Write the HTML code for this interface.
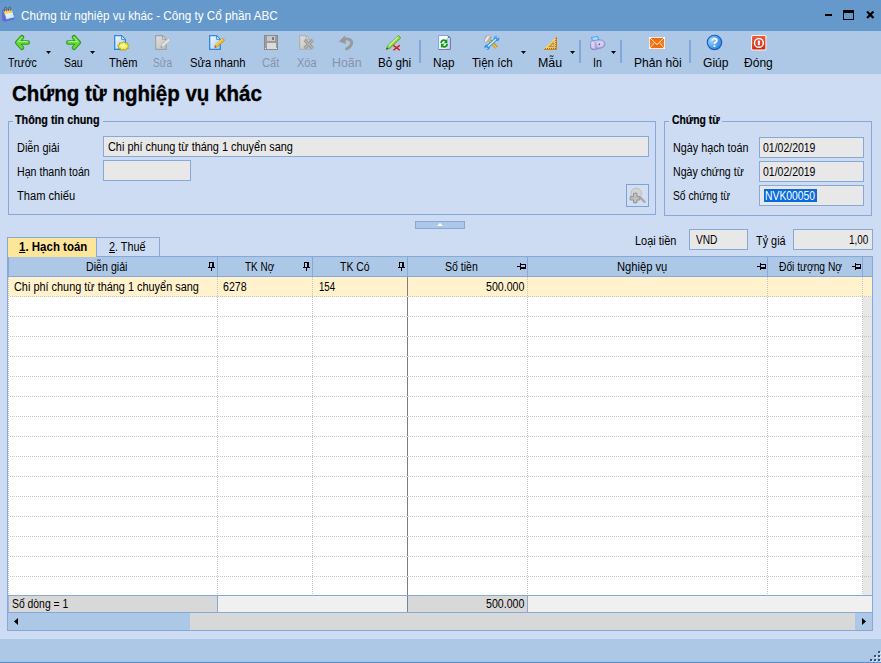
<!DOCTYPE html>
<html>
<head>
<meta charset="utf-8">
<title>Chứng từ nghiệp vụ khác</title>
<style>
html,body{margin:0;padding:0;}
body{width:881px;height:663px;overflow:hidden;background:#cddcf2;font-family:"Liberation Sans",sans-serif;font-size:12.5px;color:#000;position:relative;}
.abs{position:absolute;}
.t{position:absolute;white-space:nowrap;line-height:1;transform-origin:0 0;transform:scaleX(0.88);}
#titlebar{left:0;top:0;width:881px;height:31px;background:#6699cb;}
#toolbar{left:0;top:31px;width:881px;height:43px;background:#adc8e7;}
.tl{font-size:12.5px;top:57px;}
.dis{color:#8893a6;}
.sep{position:absolute;top:40px;width:2px;height:23px;background:#82a8d9;}
.dd{position:absolute;top:51px;width:5px;height:3px;background:#000;clip-path:polygon(0 0,100% 0,50% 100%);}
.grp{position:absolute;border:1px solid #86a9d8;box-sizing:border-box;}
.gt{font-weight:bold;-webkit-text-stroke:0.2px #000;}
.inp{position:absolute;box-sizing:border-box;border:1px solid #86a9d8;background:#e8e8e8;}
.hdr{position:absolute;top:257px;height:19px;background:#adc8e7;}
.vs{position:absolute;top:257px;width:1px;height:19px;background:#86a9d8;}
.vd{position:absolute;top:277px;width:0;height:318px;border-left:1px dotted #c0c0c0;}
.hd{position:absolute;left:9px;width:863px;height:0;border-top:1px dotted #c0c0c0;}
.vdl{position:absolute;top:277px;width:1px;height:318px;background:repeating-linear-gradient(to bottom,#c4c4c4 0 1px,transparent 1px 2px);}
.hdl{position:absolute;left:10px;width:862px;height:1px;background:repeating-linear-gradient(to right,#c4c4c4 0 1px,transparent 1px 2px);}
.hc{top:261px;}
</style>
</head>
<body>
<!-- TITLE BAR -->
<div id="titlebar" class="abs"></div>
<div class="t" id="ttl" style="left:21.40px;transform:scaleX(0.9740);top:10px;font-size:12px;color:#fff;">Chứng từ nghiệp vụ khác - Công ty Cổ phần ABC</div>
<!-- window buttons -->
<div class="abs" style="left:825px;top:14px;width:7px;height:2px;background:#000;"></div>
<div class="abs" style="left:843px;top:10px;width:11px;height:10px;box-sizing:border-box;border:1px solid #000;border-top-width:3px;"></div>
<svg class="abs" style="left:866px;top:10px" width="9" height="9" viewBox="0 0 9 9"><path d="M1 1.5 L7.5 8 M7.5 1.5 L1 8" stroke="#000" stroke-width="2.2" fill="none"/></svg>

<!-- TOOLBAR -->
<div id="toolbar" class="abs"></div>
<div class="t tl" id="tl0" style="left:8.00px;transform:scaleX(0.8445);">Trước</div>
<div class="t tl" id="tl1" style="left:64.07px;transform:scaleX(0.8399);">Sau</div>
<div class="t tl" id="tl2" style="left:108.81px;transform:scaleX(0.8884);">Thêm</div>
<div class="t tl dis" id="tl3" style="left:152.74px;transform:scaleX(0.8043);">Sửa</div>
<div class="t tl" id="tl4" style="left:190.26px;transform:scaleX(0.8975);">Sửa nhanh</div>
<div class="t tl dis" id="tl5" style="left:262.04px;transform:scaleX(0.8968);">Cất</div>
<div class="t tl dis" id="tl6" style="left:296.62px;transform:scaleX(0.8831);">Xóa</div>
<div class="t tl dis" id="tl7" style="left:331.58px;transform:scaleX(0.9904);">Hoãn</div>
<div class="t tl" id="tl8" style="left:378.03px;transform:scaleX(0.9372);">Bỏ ghi</div>
<div class="t tl" id="tl9" style="left:433.40px;transform:scaleX(0.9409);">Nạp</div>
<div class="t tl" id="tl10" style="left:471.59px;transform:scaleX(0.9225);">Tiện ích</div>
<div class="t tl" id="tl11" style="left:537.82px;transform:scaleX(0.9914);">Mẫu</div>
<div class="t tl" id="tl12" style="left:593.1px;transform:scaleX(0.85);">In</div>
<div class="t tl" id="tl13" style="left:634.00px;transform:scaleX(0.9661);">Phản hồi</div>
<div class="t tl" id="tl14" style="left:703.00px;transform:scaleX(0.9686);">Giúp</div>
<div class="t tl" id="tl15" style="left:744.44px;transform:scaleX(0.9626);">Đóng</div>
<div class="sep" style="left:419px"></div>
<div class="sep" style="left:579px"></div>
<div class="sep" style="left:620px"></div>
<div class="sep" style="left:689px"></div>
<div class="dd" style="left:46px"></div>
<div class="dd" style="left:90px"></div>
<div class="dd" style="left:521px"></div>
<div class="dd" style="left:570px"></div>
<div class="dd" style="left:611px"></div>
<svg width="0" height="0" style="position:absolute"><defs>
<linearGradient id="gpage" x1="0" y1="0" x2="1" y2="1"><stop offset="0" stop-color="#f8fbff"/><stop offset="1" stop-color="#a3caf3"/></linearGradient>
<linearGradient id="ggray" x1="0" y1="0" x2="1" y2="1"><stop offset="0" stop-color="#e2e2e2"/><stop offset="1" stop-color="#bdbdbd"/></linearGradient>
<radialGradient id="ghelp" cx="0.3" cy="0.35" r="0.85"><stop offset="0" stop-color="#a4d6ff"/><stop offset="0.55" stop-color="#4fa2f2"/><stop offset="1" stop-color="#2277de"/></radialGradient>
<linearGradient id="gred" x1="0" y1="0" x2="0" y2="1"><stop offset="0" stop-color="#ee5a3a"/><stop offset="1" stop-color="#d22a10"/></linearGradient>
<linearGradient id="gprn" x1="0" y1="0" x2="0" y2="1"><stop offset="0" stop-color="#d4d0f2"/><stop offset="1" stop-color="#9a94cf"/></linearGradient>
</defs></svg>
<svg class="abs" style="left:0px;top:0px" width="18" height="26" viewBox="0 0 18 26">
<defs><linearGradient id="gcal" x1="0" y1="0" x2="1" y2="1"><stop offset="0" stop-color="#ffffff"/><stop offset="1" stop-color="#c6defa"/></linearGradient></defs>
<path d="M2.2 9.4 L4 9.2 L14.4 19 L14.2 19.6 L4.4 21.8 L2.2 20.4 Z" fill="#6f62d4"/>
<path d="M3.4 10.8 L12 9.7 L14.8 17.5 L6.2 19.7 Z" fill="url(#gcal)" stroke="#3585e4" stroke-width="0.8" stroke-linejoin="round"/>
<path d="M3.5 10.9 L12 9.8 L12.8 12.2 L4.4 13.9 Z" fill="#f7c832"/>
<path d="M4.6 11.6 L9 11 L9.4 12 L5 12.8 Z" fill="#fde27a"/>
<path d="M4.5 11.6 V8.6 Q4.5 7.2 5.6 7.2 Q6.7 7.2 6.7 8.6 V11.2 M8.5 11 V8.4 Q8.5 7 9.6 7 Q10.7 7 10.7 8.4 V10.8" stroke="#55596a" stroke-width="0.9" fill="none"/>
</svg>
<svg class="abs" style="left:14px;top:34px" width="16" height="17" viewBox="0 0 16 17"><g  fill="none" stroke-linecap="round" stroke-linejoin="round">
<path d="M8 3.3 L3.2 8.5 L8 13.7 M3.8 8.5 H13.7" stroke="#2a9a1c" stroke-width="4.6"/>
<path d="M8 3.4 L3.4 8.5 L8 13.6 M4 8.5 H13.6" stroke="#63d838" stroke-width="2.7"/>
<path d="M7.8 3.4 L4 7.6 H13.2" stroke="#b4f389" stroke-width="1"/>
</g></svg>
<svg class="abs" style="left:65.5px;top:34px" width="16" height="17" viewBox="0 0 16 17"><g transform="translate(16,0) scale(-1,1)" fill="none" stroke-linecap="round" stroke-linejoin="round">
<path d="M8 3.3 L3.2 8.5 L8 13.7 M3.8 8.5 H13.7" stroke="#2a9a1c" stroke-width="4.6"/>
<path d="M8 3.4 L3.4 8.5 L8 13.6 M4 8.5 H13.6" stroke="#63d838" stroke-width="2.7"/>
<path d="M7.8 3.4 L4 7.6 H13.2" stroke="#b4f389" stroke-width="1"/>
</g></svg>
<svg class="abs" style="left:114px;top:34px" width="16" height="17" viewBox="0 0 16 17">
<path d="M0.7 1.7 H7.6 L11.3 5.4 V15.3 H0.7 Z" fill="url(#gpage)" stroke="#2f88da" stroke-width="1.3"/>
<path d="M7.6 1.7 V5.4 H11.3 Z" fill="#e4f0fc" stroke="#2f88da" stroke-width="0.9" stroke-linejoin="round"/>
<path d="M9.4 7.6 L10.9 9.1 L13.3 8.7 L13.2 10.5 L15.3 11.4 L13.7 12.8 L14.6 14.5 L12.2 14.7 L11.5 16.5 L9.4 15.5 L7.3 16.5 L6.6 14.7 L4.2 14.5 L5.1 12.8 L3.5 11.4 L5.6 10.6 L5.5 8.7 L7.9 9.1 Z" fill="#f3ec48" stroke="#a39a1c" stroke-width="0.8" stroke-linejoin="round"/>
<ellipse cx="9.2" cy="11.8" rx="2.8" ry="1.8" fill="#fbf8a0"/>
</svg>
<svg class="abs" style="left:155px;top:34px" width="17" height="17" viewBox="0 0 17 17">
<path d="M0.7 1.7 H7.6 L11.3 5.4 V15.3 H0.7 Z" fill="url(#ggray)" stroke="#a0a0a0" stroke-width="1.2"/>
<path d="M7.6 1.7 V5.4 H11.3 Z" fill="#dcdcdc" stroke="#a0a0a0" stroke-width="0.9" stroke-linejoin="round"/>
<path d="M13.4 4.2 L15.6 6.2 L8.4 12.8 L5.8 13.5 L6.4 11 Z" fill="#e4e4e4" stroke="#b4b4b4" stroke-width="0.8" stroke-linejoin="round"/>
<path d="M5.8 13.5 L6.2 12.2 L7.2 13.1 Z" fill="#6a6a6a"/>
</svg>
<svg class="abs" style="left:209px;top:34px" width="17" height="17" viewBox="0 0 17 17">
<path d="M0.7 1.7 H7.6 L11.3 5.4 V15.3 H0.7 Z" fill="url(#gpage)" stroke="#2f88da" stroke-width="1.3"/>
<path d="M7.6 1.7 V5.4 H11.3 Z" fill="#e4f0fc" stroke="#2f88da" stroke-width="0.9" stroke-linejoin="round"/>
<path d="M13.4 4.2 L15.6 6.2 L8.4 12.8 L5.8 13.5 L6.4 11 Z" fill="#f2bd2e" stroke="#c48a10" stroke-width="0.8" stroke-linejoin="round"/>
<path d="M12.8 5.2 L7 10.6" stroke="#fbe592" stroke-width="0.9"/>
<path d="M5.8 13.5 L6.2 12.2 L7.2 13.1 Z" fill="#222"/>
</svg>
<svg class="abs" style="left:264px;top:35px" width="14" height="15" viewBox="0 0 14 15" shape-rendering="crispEdges">
<rect x="0" y="0" width="14" height="15" fill="#8c8c8c"/>
<rect x="1" y="1" width="12" height="13" fill="#9c9c9c"/>
<rect x="3" y="1" width="8" height="5" fill="#c9c9c9"/>
<rect x="8" y="2" width="2" height="3" fill="#7a7a7a"/>
<rect x="3" y="8" width="9" height="6" fill="#dcdcdc"/>
<rect x="1" y="13" width="1" height="1" fill="#e8e8e8"/><rect x="12" y="13" width="1" height="1" fill="#e8e8e8"/>
</svg>
<svg class="abs" style="left:299px;top:34px" width="16" height="17" viewBox="0 0 16 17">
<path d="M0.7 1.7 H7.4 L11 5.3 V15.3 H0.7 Z" fill="url(#ggray)" stroke="#adadad" stroke-width="1.1"/>
<path d="M7.4 1.7 V5.3 H11 Z" fill="#dcdcdc" stroke="#adadad" stroke-width="0.9" stroke-linejoin="round"/>
<path d="M5.6 6 L13.8 14.4 M13.8 6 L5.6 14.4" stroke="#8f8f8f" stroke-width="3" fill="none"/>
<path d="M5.6 6 L13.8 14.4 M13.8 6 L5.6 14.4" stroke="#b4b4b4" stroke-width="1.6" fill="none"/>
</svg>
<svg class="abs" style="left:338px;top:34px" width="17" height="17" viewBox="0 0 17 17">
<path d="M5 6 C9.5 3.6 14 5.4 13.6 9.2 C13.4 11.8 11.2 13.6 8.6 15" stroke="#999" stroke-width="2.9" fill="none" stroke-linecap="round"/>
<path d="M0.8 7.6 L7 1.6 L8 10 Z" fill="#999"/>
</svg>
<svg class="abs" style="left:385px;top:34px" width="17" height="17" viewBox="0 0 17 17">
<path d="M13.4 1.6 L15.8 3.8 L5 14.2 L1.4 15.4 L2.6 11.8 Z" fill="#8bd93a" stroke="#4c981a" stroke-width="0.8" stroke-linejoin="round"/>
<path d="M13 3 L3.8 12" stroke="#d3f8a8" stroke-width="1.1"/>
<path d="M1.4 15.4 L2 13.7 L3.2 14.8 Z" fill="#222"/>
<path d="M8.4 11.4 L14.8 16.2 M14.8 11.4 L8.4 16.2" stroke="#e21212" stroke-width="1.4" fill="none"/>
</svg>
<svg class="abs" style="left:438px;top:34px" width="14" height="17" viewBox="0 0 14 17">
<path d="M0.6 1.5 H9.8 L12.4 4.1 V15.4 H0.6 Z" fill="#fbfdff"/>
<path d="M8.4 4 H12.4 V15.4 H8.4 Z" fill="#cfdcfb"/>
<path d="M0.6 15.4 V1.5 H9.8" fill="none" stroke="#7fa0dc" stroke-width="1"/>
<path d="M9.8 1.5 L12.4 4.1 V15.4 H0.6" fill="none" stroke="#6a70a2" stroke-width="1"/>
<path d="M9.8 1.5 V4.1 H12.4 Z" fill="#5d6aa8"/><circle cx="11.2" cy="2.9" r="0.7" fill="#4aa0f0"/>
<g id="rf"><path d="M3.2 8.4 C3.6 6.4 5.6 5.6 7.4 6.6" stroke="#0c9a0c" stroke-width="1.9" fill="none" stroke-linecap="round"/>
<path d="M9.3 4.8 V9.3 H5.8 Z" fill="#0c9a0c"/></g>
<use href="#rf" transform="rotate(180 6.1 9.5)"/>
</svg>
<svg class="abs" style="left:484px;top:34px" width="16" height="17" viewBox="0 0 16 17">
<defs><linearGradient id="ghm" x1="0" y1="0" x2="1" y2="0.6"><stop offset="0" stop-color="#8d8d8d"/><stop offset="0.45" stop-color="#f4f4f4"/><stop offset="1" stop-color="#8a8a8a"/></linearGradient></defs>
<path d="M5.4 6.4 L12.6 13.4" stroke="#cf9128" stroke-width="3.5" stroke-linecap="butt"/>
<path d="M5.2 6.6 L12.4 13.6" stroke="#f6d24a" stroke-width="1.1"/>
<path d="M0.2 7.2 L1.4 3.6 L4.4 1.2 L7.4 3.6 L4.6 5.6 L2.4 8.8 Z" fill="url(#ghm)" stroke="#8a8a8a" stroke-width="0.5"/>
<path d="M1.2 3.2 L2.4 2 " stroke="#c8802a" stroke-width="1"/>
<path d="M3.2 13 L12.6 4.6" stroke="#3593e8" stroke-width="3.2" stroke-linecap="round"/>
<circle cx="12.6" cy="4.4" r="2.7" fill="#3593e8"/><circle cx="3.1" cy="13.3" r="2.7" fill="#3593e8"/>
<path d="M4.4 12 L11.6 5.4" stroke="#d3effd" stroke-width="1.4" stroke-linecap="round"/>
<path d="M12.9 4.1 L15.6 1.4" stroke="#adc8e7" stroke-width="1.9"/>
<path d="M2.8 13.6 L0.2 16.2" stroke="#adc8e7" stroke-width="1.9"/>
<path d="M11.4 3.4 L12.4 2.6 M3.6 14.6 L2.6 15.4" stroke="#d3effd" stroke-width="0.8"/>
</svg>
<svg class="abs" style="left:543px;top:35px" width="15" height="16" viewBox="0 0 15 16">
<defs><linearGradient id="gsq" x1="0" y1="0" x2="1" y2="1"><stop offset="0.3" stop-color="#fedd72"/><stop offset="1" stop-color="#eab24a"/></linearGradient></defs>
<path d="M13.9 0.9 V14.9 H0.2 Z" fill="url(#gsq)"/><path d="M13.5 1.6 V14.5 H1" fill="none" stroke="#bf8426" stroke-width="0.9"/>
<path d="M10.9 6.4 V11.9 H5.2 Z" fill="#c48c32"/>
<path d="M10.3 8.8 V11.1 H7.9 Z" fill="#b9d3f0"/>
<path d="M12.2 3.5h1.2 M12.2 5.5h1.2 M12.2 7.5h1.2 M12.2 9.5h1.2 M12.2 11.5h1.2 M2.5 13v1.2 M4.5 13v1.2 M6.5 13v1.2 M8.5 13v1.2 M10.5 13v1.2 M12.5 13v1.2" stroke="#94621a" stroke-width="0.9"/>
</svg>
<svg class="abs" style="left:590px;top:34px" width="16" height="17" viewBox="0 0 16 17">
<path d="M0.8 3 L7.9 1.9 L9.6 5.8 L2.1 7.6 Z" fill="#46a6f2"/>
<path d="M2.2 3.8 L7.2 3 L8.2 5.4 L3 6.6 Z" fill="#a6ddff"/>
<path d="M0.4 9.4 Q0.3 6.8 3 6.5 L10 5.9 Q14.8 6 14.9 10 Q15 13.2 11.6 13.9 L4.2 15.8 Q0.7 16 0.4 13 Z" fill="url(#gprn)" stroke="#8d88c6" stroke-width="0.8"/>
<path d="M4.4 7.2 Q6.8 10.6 5.4 15.2" stroke="#a39edb" stroke-width="0.8" fill="none"/>
<path d="M1.2 8.6 Q3 7.6 4.2 7.8 L4.9 14.6 Q3 15.2 1.4 13.6 Z" fill="#dcdaf8" fill-opacity="0.8"/>
<path d="M7 8.2 Q10.4 7.2 13 8.4 Q14 10.6 12.4 12.6 L7.6 13.4 Z" fill="#dddaf9" fill-opacity="0.7"/>
<circle cx="9.4" cy="10.4" r="0.8" fill="#4d478f"/>
</svg>
<svg class="abs" style="left:649px;top:37px" width="16" height="12" viewBox="0 0 16 12">
<rect x="0" y="0" width="16" height="12" fill="#fde3d0"/>
<rect x="1" y="1" width="14" height="10" fill="#f26d0c"/>
<path d="M1.2 4 L4.4 6 L1.2 9 Z M14.8 4 L11.6 6 L14.8 9 Z" fill="#f57f22"/>
<path d="M1 1 L8 7.6 L15 1" stroke="#fff" stroke-width="1" fill="none" stroke-opacity="0.92"/>
<path d="M1 11 L5.6 5.6 M15 11 L10.4 5.6" stroke="#fff" stroke-width="0.9" fill="none" stroke-opacity="0.85"/>
<rect x="0" y="0" width="1.4" height="1.4" fill="#fff"/><rect x="14.6" y="0" width="1.4" height="1.4" fill="#fff"/><rect x="0" y="10.6" width="1.4" height="1.4" fill="#fff"/><rect x="14.6" y="10.6" width="1.4" height="1.4" fill="#fff"/>
</svg>
<svg class="abs" style="left:706px;top:34px" width="17" height="17" viewBox="0 0 17 17">
<circle cx="8.5" cy="8.4" r="7.2" fill="url(#ghelp)" stroke="#1b5cb5" stroke-width="1.1"/>
<path d="M6.2 6.6 C6.2 4 10.8 4 10.8 6.6 C10.8 8.2 8.5 8.3 8.5 10" stroke="#fff" stroke-width="1.7" fill="none"/>
<rect x="7.6" y="11.2" width="1.8" height="1.7" fill="#fff"/>
</svg>
<svg class="abs" style="left:751px;top:34px" width="17" height="17" viewBox="0 0 17 17">
<rect x="0.1" y="1" width="15.3" height="15.4" rx="1.6" fill="#fdf1ec"/>
<rect x="1.1" y="2" width="13.3" height="13.4" rx="1" fill="url(#gred)"/>
<circle cx="7.9" cy="8.9" r="4.4" fill="none" stroke="#fff" stroke-width="1.5"/>
<rect x="6.9" y="6.6" width="2" height="4.7" rx="0.4" fill="#fff"/>
</svg>

<!-- HEADING -->
<div class="t" id="h1" style="left:12.00px;transform:scaleX(0.9332);top:83px;font-size:22px;font-weight:bold;-webkit-text-stroke:0.35px #000;">Chứng từ nghiệp vụ khác</div>

<!-- GROUP: Thông tin chung -->
<div class="grp" style="left:8px;top:121px;width:648px;height:94px;"></div>
<div class="abs" style="left:13px;top:121px;width:90px;height:1px;background:#cddcf2;"></div>
<div class="t gt" id="gt1" style="left:15.29px;transform:scaleX(0.8633);top:114px;">Thông tin chung</div>
<div class="t" id="x0" style="left:17.15px;transform:scaleX(0.8728);top:142px;">Diễn giải</div>
<div class="t" id="x1" style="left:17.20px;transform:scaleX(0.8509);top:166px;">Hạn thanh toán</div>
<div class="t" id="x2" style="left:17.19px;transform:scaleX(0.8897);top:190px;">Tham chiếu</div>
<div class="inp" style="left:103px;top:136px;width:546px;height:21px;"></div>
<div class="t" id="x3" style="left:108.41px;transform:scaleX(0.8720);top:141px;">Chi phí chung từ tháng 1 chuyển sang</div>
<div class="inp" style="left:103px;top:160px;width:88px;height:21px;"></div>
<div class="inp" style="left:626px;top:184px;width:23px;height:23px;background:#d2dff2;border-color:#7ba3d8;"></div>
<svg class="abs" style="left:627px;top:185px" width="21" height="21" viewBox="0 0 21 21">
<path d="M13.4 12.6 L17.6 16.8" stroke="#a9a9a9" stroke-width="2.4" stroke-linecap="round"/>
<circle cx="9.2" cy="8.4" r="5.3" fill="#d3d3d3" stroke="#bdbdbd" stroke-width="1"/>
<path d="M6.5 8.2 H10 V11.6 H12.8 V15 H10 V17.8 H6.5 V15 H3.2 V11.6 H6.5 Z" fill="#bfbfbf" stroke="#8f8f8f" stroke-width="0.9"/>
</svg>

<!-- GROUP: Chứng từ -->
<div class="grp" style="left:664px;top:121px;width:208px;height:95px;"></div>
<div class="abs" style="left:669px;top:121px;width:53px;height:1px;background:#cddcf2;"></div>
<div class="t gt" id="gt2" style="left:671.78px;transform:scaleX(0.8270);top:114px;">Chứng từ</div>
<div class="t" id="x4" style="left:673.19px;transform:scaleX(0.8619);top:142px;">Ngày hạch toán</div>
<div class="t" id="x5" style="left:673.17px;transform:scaleX(0.8477);top:166px;">Ngày chứng từ</div>
<div class="t" id="x6" style="left:673.33px;transform:scaleX(0.8216);top:190px;">Số chứng từ</div>
<div class="inp" style="left:759px;top:137px;width:105px;height:21px;"></div>
<div class="inp" style="left:759px;top:161px;width:105px;height:21px;"></div>
<div class="inp" style="left:759px;top:185px;width:105px;height:21px;"></div>
<div class="t" id="x7" style="left:763.36px;transform:scaleX(0.8384);top:142px;">01/02/2019</div>
<div class="t" id="x8" style="left:763.36px;transform:scaleX(0.8384);top:166px;">01/02/2019</div>
<div class="abs" style="left:764px;top:189px;width:53px;height:13px;background:#0a6cdc;"></div>
<div class="t" id="x9" style="left:765.29px;transform:scaleX(0.8282);top:190px;color:#fff;">NVK00050</div>

<!-- collapse button -->
<div class="abs" style="left:415px;top:221px;width:50px;height:8px;box-sizing:border-box;border:1px solid #86a9d8;background:#adc8e7;"></div>
<div class="abs" style="left:437px;top:223px;width:0;height:0;border-left:3px solid transparent;border-right:3px solid transparent;border-bottom:3px solid #fff;"></div>

<!-- currency -->
<div class="t" id="x10" style="left:635.00px;transform:scaleX(0.8737);top:235px;">Loại tiền</div>
<div class="inp" style="left:689px;top:229px;width:59px;height:21px;"></div>
<div class="t" id="x11" style="left:695.90px;transform:scaleX(0.8127);top:234px;">VND</div>
<div class="t" id="x12" style="left:755.71px;transform:scaleX(0.8706);top:235px;">Tỷ giá</div>
<div class="inp" style="left:793px;top:229px;width:80px;height:21px;"></div>
<div class="t" id="x13" style="left:849.37px;transform:scaleX(0.7947);top:234px;">1,00</div>

<!-- TABS -->
<div class="abs" style="left:7px;top:237px;width:90px;height:20px;box-sizing:border-box;border:1px solid #86a9d8;border-bottom:none;background:#fde59a;z-index:3;"></div>
<div class="abs" style="left:96px;top:237px;width:64px;height:20px;box-sizing:border-box;border:1px solid #86a9d8;border-bottom:none;background:#cddcf2;"></div>
<div class="t" id="tab1" style="z-index:4;left:18.87px;transform:scaleX(0.9200);top:241px;font-weight:bold;"><u>1</u>. Hạch toán</div>
<div class="t" id="tab2" style="left:109.00px;transform:scaleX(0.8648);top:241px;"><u>2</u>. Thuế</div>

<!-- GRID -->
<div class="abs" id="grid" style="left:7px;top:256px;width:866px;height:375px;box-sizing:border-box;border:1px solid #86a9d8;background:#fff;"></div>
<div class="hdr" style="left:8px;width:864px;"></div>
<div class="abs" style="left:8px;top:276px;width:864px;height:1px;background:#86a9d8;"></div>
<div class="abs" style="left:8px;top:277px;width:864px;height:20px;background:#fff2cc;"></div>
<div class="abs" style="left:863px;top:297px;width:9px;height:298px;background:#e8e8e8;"></div>

<div class="vs" style="left:8px"></div>
<div class="vdl" style="left:8px"></div>
<div class="vs" style="left:217px"></div>
<div class="vs" style="left:312px"></div>
<div class="vs" style="left:407px"></div>
<div class="vs" style="left:527px"></div>
<div class="vs" style="left:767px"></div>
<div class="vs" style="left:862px"></div>
<div class="vdl" style="left:217px"></div>
<div class="vdl" style="left:312px"></div>
<div class="vdl" style="left:527px"></div>
<div class="vdl" style="left:767px"></div>
<div class="vdl" style="left:862px"></div>
<div class="abs" style="left:407px;top:277px;width:1px;height:318px;background:repeating-linear-gradient(to bottom,#7d7d7d 0 19px,#f4f4f4 19px 20px);"></div>
<div class="hdl" style="top:296px"></div>
<div class="hdl" style="top:316px"></div>
<div class="hdl" style="top:336px"></div>
<div class="hdl" style="top:356px"></div>
<div class="hdl" style="top:376px"></div>
<div class="hdl" style="top:396px"></div>
<div class="hdl" style="top:416px"></div>
<div class="hdl" style="top:436px"></div>
<div class="hdl" style="top:456px"></div>
<div class="hdl" style="top:476px"></div>
<div class="hdl" style="top:496px"></div>
<div class="hdl" style="top:516px"></div>
<div class="hdl" style="top:536px"></div>
<div class="hdl" style="top:556px"></div>
<div class="hdl" style="top:576px"></div>
<div class="t hc" id="x14" style="left:86.00px;transform:scaleX(0.8530);">Diễn giải</div>
<div class="t hc" id="x15" style="left:245.21px;transform:scaleX(0.7983);">TK Nợ</div>
<div class="t hc" id="x16" style="left:339.87px;transform:scaleX(0.8354);">TK Có</div>
<div class="t hc" id="x17" style="left:445.24px;transform:scaleX(0.8428);">Số tiền</div>
<div class="t hc" id="x18" style="left:617.00px;transform:scaleX(0.8942);">Nghiệp vụ</div>
<div class="t hc" id="x19" style="left:778.90px;transform:scaleX(0.8197);">Đối tượng Nợ</div>
<svg class="abs" style="left:208px;top:262px" width="7" height="9" viewBox="0 0 7 9" shape-rendering="crispEdges"><path d="M1 0h5v5h-5z M2 1v4h2v-4z" fill="#000" fill-rule="evenodd"/><rect x="0" y="5" width="7" height="1" fill="#000"/><rect x="3" y="6" width="1" height="3" fill="#000"/></svg>
<svg class="abs" style="left:303px;top:262px" width="7" height="9" viewBox="0 0 7 9" shape-rendering="crispEdges"><path d="M1 0h5v5h-5z M2 1v4h2v-4z" fill="#000" fill-rule="evenodd"/><rect x="0" y="5" width="7" height="1" fill="#000"/><rect x="3" y="6" width="1" height="3" fill="#000"/></svg>
<svg class="abs" style="left:398px;top:262px" width="7" height="9" viewBox="0 0 7 9" shape-rendering="crispEdges"><path d="M1 0h5v5h-5z M2 1v4h2v-4z" fill="#000" fill-rule="evenodd"/><rect x="0" y="5" width="7" height="1" fill="#000"/><rect x="3" y="6" width="1" height="3" fill="#000"/></svg>
<svg class="abs" style="left:517px;top:263px" width="9" height="7" viewBox="0 0 9 7" shape-rendering="crispEdges"><path d="M4 1h5v5h-5z M4 2v2h4v-2z" fill="#000" fill-rule="evenodd"/><rect x="3" y="0" width="1" height="7" fill="#000"/><rect x="0" y="3" width="3" height="1" fill="#000"/></svg>
<svg class="abs" style="left:757px;top:263px" width="9" height="7" viewBox="0 0 9 7" shape-rendering="crispEdges"><path d="M4 1h5v5h-5z M4 2v2h4v-2z" fill="#000" fill-rule="evenodd"/><rect x="3" y="0" width="1" height="7" fill="#000"/><rect x="0" y="3" width="3" height="1" fill="#000"/></svg>
<svg class="abs" style="left:852px;top:263px" width="9" height="7" viewBox="0 0 9 7" shape-rendering="crispEdges"><path d="M4 1h5v5h-5z M4 2v2h4v-2z" fill="#000" fill-rule="evenodd"/><rect x="3" y="0" width="1" height="7" fill="#000"/><rect x="0" y="3" width="3" height="1" fill="#000"/></svg>
<div class="t" id="x20" style="left:14.35px;transform:scaleX(0.8720);top:281px;">Chi phí chung từ tháng 1 chuyển sang</div>
<div class="t" id="x21" style="left:222.81px;transform:scaleX(0.8496);top:281px;">6278</div>
<div class="t" id="x22" style="left:318.60px;transform:scaleX(0.7717);top:281px;">154</div>
<div class="t" id="x23" style="left:485.78px;transform:scaleX(0.8487);top:281px;">500.000</div>

<!-- footer -->
<div class="abs" style="left:8px;top:595px;width:864px;height:18px;box-sizing:border-box;border-top:1px solid #86a9d8;border-bottom:1px solid #86a9d8;background:#f0f0f0;"></div>
<div class="abs" style="left:8px;top:596px;width:209px;height:16px;background:#d8d8d8;"></div>
<div class="abs" style="left:408px;top:596px;width:119px;height:16px;background:#d8d8d8;"></div>
<div class="abs" style="left:8px;top:596px;width:1px;height:16px;background:#9bb8df;"></div>
<div class="abs" style="left:217px;top:596px;width:1px;height:16px;background:#86a9d8;"></div>
<div class="abs" style="left:407px;top:596px;width:1px;height:16px;background:#6d84a8;"></div>
<div class="abs" style="left:527px;top:596px;width:1px;height:16px;background:#86a9d8;"></div>
<div class="t" id="x24" style="left:12.19px;transform:scaleX(0.8299);top:598px;">Số dòng = 1</div>
<div class="t" id="x25" style="left:485.78px;transform:scaleX(0.8487);top:598px;">500.000</div>
<!-- scrollbar -->
<div class="abs" style="left:8px;top:613px;width:864px;height:17px;background:#d8d8d8;"></div>
<div class="abs" style="left:8px;top:613px;width:182px;height:17px;background:#adc8e7;"></div>
<div class="abs" style="left:855px;top:613px;width:17px;height:17px;background:#adc8e7;"></div>
<div class="abs" style="left:14px;top:618px;width:4px;height:7px;background:#000;clip-path:polygon(100% 0,100% 100%,0 50%);"></div>
<div class="abs" style="left:862px;top:618px;width:4px;height:7px;background:#000;clip-path:polygon(0 0,0 100%,100% 50%);"></div>

<!-- STATUS BAR -->
<div class="abs" style="left:0;top:639px;width:881px;height:24px;background:#adc8e7;"></div>
<div class="abs" style="left:0;top:661px;width:881px;height:1px;background:#a3c1e4;"></div><div class="abs" style="left:0;top:662px;width:881px;height:1px;background:#5f8fc9;"></div>
<div class="abs" style="left:879px;top:652px;width:2px;height:2px;background:#dce9f9;"></div><div class="abs" style="left:878px;top:651px;width:2px;height:2px;background:#34507f;"></div>
<div class="abs" style="left:875px;top:656px;width:2px;height:2px;background:#dce9f9;"></div><div class="abs" style="left:874px;top:655px;width:2px;height:2px;background:#34507f;"></div>
<div class="abs" style="left:879px;top:656px;width:2px;height:2px;background:#dce9f9;"></div><div class="abs" style="left:878px;top:655px;width:2px;height:2px;background:#34507f;"></div>
<div class="abs" style="left:871px;top:660px;width:2px;height:2px;background:#dce9f9;"></div><div class="abs" style="left:870px;top:659px;width:2px;height:2px;background:#34507f;"></div>
<div class="abs" style="left:875px;top:660px;width:2px;height:2px;background:#dce9f9;"></div><div class="abs" style="left:874px;top:659px;width:2px;height:2px;background:#34507f;"></div>
<div class="abs" style="left:879px;top:660px;width:2px;height:2px;background:#dce9f9;"></div><div class="abs" style="left:878px;top:659px;width:2px;height:2px;background:#34507f;"></div>
</body>
</html>
